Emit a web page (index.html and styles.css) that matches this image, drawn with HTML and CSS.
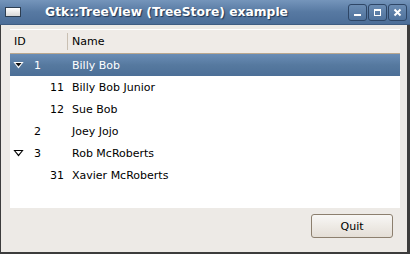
FILE: index.html
```html
<!DOCTYPE html>
<html lang="en">
<head>
  <meta charset="UTF-8">
  <title>Gtk::TreeView (TreeStore) example</title>
  <link rel="stylesheet" href="styles.css">
</head>
<body>
  <div class="window">
    <div class="titlebar">
      <span class="win-icon"></span>
      <span class="title">Gtk::TreeView (TreeStore) example</span>
      <div class="win-buttons">
        <span class="wbtn"><svg width="9" height="9" viewBox="0 0 9 9"><rect x="1" y="6" width="7" height="2" fill="#fff"/></svg></span>
        <span class="wbtn"><svg width="9" height="9" viewBox="0 0 9 9"><rect x="1.5" y="1.5" width="6" height="6" fill="none" stroke="#fff" stroke-width="1"/><rect x="1" y="1" width="7" height="2" fill="#fff"/></svg></span>
        <span class="wbtn"><svg width="9" height="9" viewBox="0 0 9 9"><path d="M1.5 1.5 L7.5 7.5 M7.5 1.5 L1.5 7.5" stroke="#fff" stroke-width="2"/></svg></span>
      </div>
    </div>
    <div class="client">
      <div class="tree">
        <div class="tree-head">
          <div class="col-id">ID</div>
          <div class="col-name">Name</div>
        </div>
        <div class="row selected">
          <div class="col-id"><span class="expander open"></span>1</div>
          <div class="col-name">Billy Bob</div>
        </div>
        <div class="row">
          <div class="col-id child">11</div>
          <div class="col-name">Billy Bob Junior</div>
        </div>
        <div class="row">
          <div class="col-id child">12</div>
          <div class="col-name">Sue Bob</div>
        </div>
        <div class="row">
          <div class="col-id"><span class="expander"></span>2</div>
          <div class="col-name">Joey Jojo</div>
        </div>
        <div class="row">
          <div class="col-id"><span class="expander open"></span>3</div>
          <div class="col-name">Rob McRoberts</div>
        </div>
        <div class="row">
          <div class="col-id child">31</div>
          <div class="col-name">Xavier McRoberts</div>
        </div>
      </div>
      <div class="actions">
        <button class="quit">Quit</button>
      </div>
    </div>
  </div>
</body>
</html>
```

FILE: styles.css
```css
body { margin: 0; background: #3a3a3a; font-family: "DejaVu Sans", sans-serif; }
.window { width: 410px; height: 254px; box-sizing: border-box; display: flex; flex-direction: column; background: #edeae6; border: 1px solid #3c3c3c; border-top: none; border-right-width: 3px; border-bottom-width: 2px; }
.titlebar { height: 24px; flex: none; display: flex; align-items: center; background: linear-gradient(#7595bb, #5779a2 50%, #4c6e98); margin: 0 -3px 0 -1px; border-bottom: 1px solid #3f5d82; }
.win-icon { width: 14px; height: 8px; margin-left: 5px; border: 1px solid #2d3e52; background: linear-gradient(#fff, #d8d8d8); }
.title { flex: 1; text-align: center; color: #fff; font-weight: bold; font-size: 12.3px; text-shadow: 1px 1px 1px #1e3452; margin-right: 36px; }
.win-buttons { display: flex; gap: 1px; margin-right: 3px; }
.wbtn { width: 17px; height: 15px; border: 1px solid #2e4666; border-radius: 3px; display: flex; align-items: center; justify-content: center; background: linear-gradient(#6b8cb3, #4f729c); }
.client { flex: 1; display: flex; flex-direction: column; padding: 4px 7px 0 9px; }
.tree { height: 179px; background: #fff; font-size: 11px; color: #000; }
.tree-head { height: 23px; display: flex; align-items: center; background: #efebe7; border-top: 1px solid #fff; border-bottom: 1px solid #b9a78f; }
.col-id { width: 57px; box-sizing: border-box; flex: none; display: flex; align-items: center; }
.col-name { flex: 1; padding-left: 5px; }
.tree-head .col-id { padding-left: 4px; }
.tree-head .col-name { border-left: 1px solid #c9bfb2; padding-left: 4px; height: 17px; line-height: 17px; }
.row { height: 22px; display: flex; align-items: center; }
.row .col-id { padding-left: 3px; }
.row .col-id.child { padding-left: 40px; }
.row.selected { background: linear-gradient(#6a8db6, #56799f 50%, #4c6f97); color: #fff; }
.expander { width: 11px; height: 7px; margin-right: 10px; position: relative; }
.expander.open { background: #000; clip-path: polygon(0 0, 100% 0, 50% 100%); }
.expander.open::after { content: ""; position: absolute; left: 2px; top: 1px; width: 7px; height: 4px; background: #fff; clip-path: polygon(0 0, 100% 0, 50% 100%); }
.selected .expander.open { background: #fff; }
.selected .expander.open::after { background: #111; }
.actions { flex: 1; display: flex; justify-content: flex-end; align-items: flex-start; padding: 6px 7px 0 0; }
.quit { width: 82px; height: 24px; font-family: "DejaVu Sans", sans-serif; font-size: 11px; color: #000; background: linear-gradient(#f8f7f5, #e4ded6); border: 1px solid #8c7f6e; border-radius: 3px; }
```
